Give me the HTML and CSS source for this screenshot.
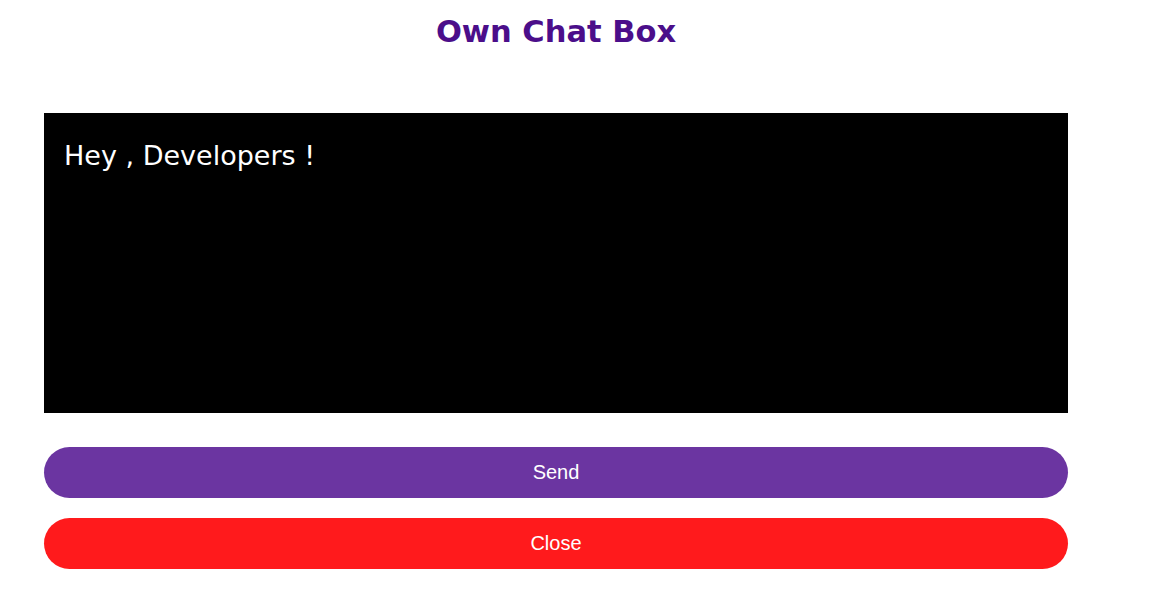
FILE: index.html
```html
<!DOCTYPE html>
<html>
<head>
<meta charset="utf-8">
<link rel="stylesheet" href="styles.css">
</head>
<body>
<div class="wrap">
  <h1 class="title">Own Chat Box</h1>
  <div class="chat">Hey , Developers !</div>
  <button class="btn send">Send</button>
  <button class="btn close">Close</button>
</div>
</body>
</html>
```
FILE: styles.css
```css
body {
  margin: 0;
  background: #fff;
}
.wrap {
  width: 1024px;
  margin-left: 44px;
  display: flex;
  flex-direction: column;
}
.title {
  margin: 10px 0 0;
  height: 103px;
  text-align: center;
  font-family: "Comic Sans MS", "DejaVu Sans", sans-serif;
  font-weight: bold;
  font-size: 30.5px;
  line-height: 44px;
  color: #4b0e8a;
}
.chat {
  height: 300px;
  background: #000;
  color: #fff;
  font-family: "Comic Sans MS", "DejaVu Sans", sans-serif;
  font-size: 27px;
  padding: 25px 20px 24px;
  box-sizing: border-box;
  line-height: 36px;
}
.btn {
  height: 51px;
  border: none;
  border-radius: 26px;
  color: #fff;
  font-family: "Liberation Sans", Arial, sans-serif;
  font-size: 20px;
  width: 100%;
}
.send {
  margin-top: 34px;
  background: #6b35a1;
}
.close {
  margin-top: 20px;
  background: #ff1a1c;
}
```
